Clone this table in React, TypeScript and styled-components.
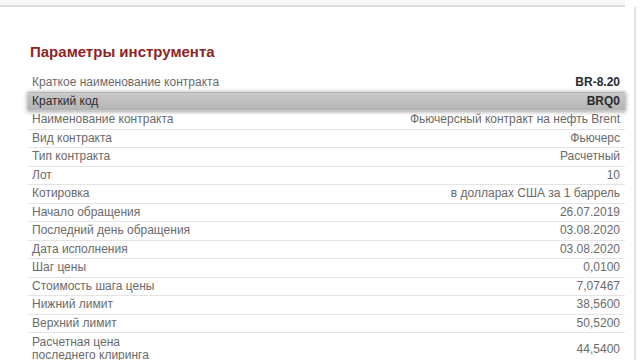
import { FC } from "react";
import styled, { createGlobalStyle } from "styled-components";

const GlobalStyle = createGlobalStyle`
    html, body {
        margin: 0;
        padding: 0;
        background: #ffffff;
        font-family: "Liberation Sans", Arial, sans-serif;
    }
`;

interface Param {
    label: string;
    value: string;
    bold?: boolean;
    active?: boolean;
}

const params: Param[] = [
    { label: "Краткое наименование контракта", value: "BR-8.20", bold: true },
    { label: "Краткий код", value: "BRQ0", bold: true, active: true },
    { label: "Наименование контракта", value: "Фьючерсный контракт на нефть Brent" },
    { label: "Вид контракта", value: "Фьючерс" },
    { label: "Тип контракта", value: "Расчетный" },
    { label: "Лот", value: "10" },
    { label: "Котировка", value: "в долларах США за 1 баррель" },
    { label: "Начало обращения", value: "26.07.2019" },
    { label: "Последний день обращения", value: "03.08.2020" },
    { label: "Дата исполнения", value: "03.08.2020" },
    { label: "Шаг цены", value: "0,0100" },
    { label: "Стоимость шага цены", value: "7,07467" },
    { label: "Нижний лимит", value: "38,5600" },
    { label: "Верхний лимит", value: "50,5200" },
    { label: "Расчетная цена последнего клиринга", value: "44,5400" },
];

const Page = styled.div`
    display: flex;
    flex-direction: column;
    width: 640px;
    height: 360px;
    overflow: hidden;
`;

const TopStrip = styled.div`
    height: 5px;
    width: 625px;
    background: #f7f7f7;
    border-bottom: 2px solid #dcdcdc;
    flex-shrink: 0;
`;

const Panel = styled.div`
    flex: 1;
    width: 636px;
    border-right: 2px solid #e2e2e2;
    padding: 36px 0 0 28px;
    box-sizing: border-box;
`;

const Title = styled.h2`
    margin: 0 0 13px 2px;
    font-size: 15px;
    font-weight: bold;
    color: #8e2424;
    line-height: 18px;
`;

const Table = styled.div`
    width: 597px;
    display: flex;
    flex-direction: column;
`;

const Row = styled.div<{ $active?: boolean; $tall?: boolean }>`
    display: flex;
    justify-content: space-between;
    align-items: center;
    min-height: 18.5px;
    padding: ${(p) => (p.$tall ? "3px 5px 0 4px" : "0 5px 0 4px")};
    box-sizing: border-box;
    font-size: 12px;
    line-height: 13px;
    color: ${(p) => (p.$active ? "#2b2b2b" : "#6a6a6a")};
    border-bottom: 1px solid ${(p) => (p.$active ? "transparent" : "#e4e4e4")};
    background: ${(p) => (p.$active ? "linear-gradient(#c9c9c9, #b3b3b3)" : "transparent")};
    box-shadow: ${(p) => (p.$active ? "0 0 4px 1px rgba(0, 0, 0, 0.35)" : "none")};
    position: relative;
`;

const Label = styled.span<{ $narrow?: boolean }>`
    max-width: ${(p) => (p.$narrow ? "130px" : "none")};
`;

const Value = styled.span<{ $bold?: boolean }>`
    font-weight: ${(p) => (p.$bold ? "bold" : "normal")};
    color: ${(p) => (p.$bold ? "#2b2b2b" : "inherit")};
    text-align: right;
`;

const App: FC = () => {
    return (
        <>
            <GlobalStyle />
            <Page>
                <TopStrip />
                <Panel>
                    <Title>Параметры инструмента</Title>
                    <Table>
                        {params.map((p, index) => {
                            const tall = index === params.length - 1;
                            return (
                                <Row key={p.label} $active={p.active} $tall={tall}>
                                    <Label $narrow={tall}>{p.label}</Label>
                                    <Value $bold={p.bold}>{p.value}</Value>
                                </Row>
                            );
                        })}
                    </Table>
                </Panel>
            </Page>
        </>
    );
};

export default App;
